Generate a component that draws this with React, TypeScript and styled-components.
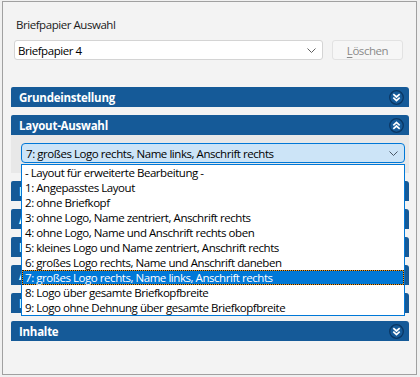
import React from 'react';
import styled, { createGlobalStyle } from 'styled-components';

const Global = createGlobalStyle`
  html, body { margin: 0; padding: 0; background: #f0f0f0; }
  body { font-family: "Open Sans", "Noto Sans", sans-serif; font-size: 11.5px; letter-spacing: -0.45px; color: #000; }
  #root { width: 420px; height: 377px; }
`;

const Panel = styled.div`
  box-sizing: border-box;
  margin: 1px 0 0 2px;
  width: 415px;
  height: 374px;
  border: 1px solid #a0a0a0;
  background: #f3f3f3;
  padding: 15px 7px 0 8px;
`;

const TopSection = styled.div`
  padding-left: 3px;
  display: flex;
  flex-direction: column;
  gap: 7px;
`;

const Label = styled.div`
  padding-left: 2px;
  line-height: 16px;
  color: #1a1a1a;
`;

const Row = styled.div`
  display: flex;
  gap: 9px;
  align-items: center;
`;

const SelectBox = styled.div<{ $w: number; $active?: boolean }>`
  box-sizing: border-box;
  width: ${p => p.$w}px;
  height: 20px;
  display: flex;
  align-items: center;
  justify-content: space-between;
  padding: 0 6px 0 ${p => (p.$active ? 4 : 3)}px;
  background: ${p => (p.$active ? '#cce4f7' : '#ffffff')};
  border: 1px solid ${p => (p.$active ? '#0078d7' : '#d4d4d4')};
  border-radius: ${p => (p.$active ? 4 : 3)}px;
  white-space: nowrap;
`;

const Button = styled.div`
  box-sizing: border-box;
  width: 71px;
  height: 20px;
  display: flex;
  align-items: center;
  justify-content: center;
  background: #f6f6f6;
  border: 1px solid #e2e2e2;
  border-radius: 3px;
  color: #8a8a8a;
  u { text-decoration-thickness: 1px; text-underline-offset: 2px; }
`;

const Accordion = styled.div`
  margin-top: 27px;
  width: 398px;
  display: flex;
  flex-direction: column;
  gap: 8px;
`;

const Header = styled.div`
  box-sizing: border-box;
  height: 20px;
  display: flex;
  align-items: center;
  justify-content: space-between;
  padding: 0 5px 0 8px;
  background: #155a98;
  border-radius: 2px 3px 0 0;
  color: #fff;
  font-size: 11.5px;
  font-weight: 700;
  letter-spacing: -0.25px;
  white-space: nowrap;
`;

const Section = styled.div`
  position: relative;
  display: flex;
  flex-direction: column;
`;

const Content = styled.div`
  height: 38px;
  box-sizing: border-box;
  padding: 8px 4px 0 10px;
  background: #e8e8e8;
`;

const List = styled.div`
  position: absolute;
  z-index: 5;
  left: 10px;
  top: 49px;
  width: 384px;
  box-sizing: border-box;
  border: 1px solid #0078d7;
  background: #fff;
  display: flex;
  flex-direction: column;
`;

const Item = styled.div<{ $selected?: boolean }>`
  box-sizing: border-box;
  height: 15px;
  line-height: 13px;
  padding-left: 2px;
  white-space: nowrap;
  border: 1px solid transparent;
  ${p =>
    p.$selected
      ? `color:#fff; border: 1px dotted #1b1b1b; background: linear-gradient(#0078d7,#0078d7) padding-box, #f29a1a border-box;`
      : ''}
`;

const Chevron = ({ color = '#5f5f5f' }: { color?: string }) => (
  <svg width="9" height="5" viewBox="0 0 9 5">
    <polyline points="0.5,0.5 4.5,4.5 8.5,0.5" fill="none" stroke={color} strokeWidth="1" />
  </svg>
);

const Toggle = ({ up }: { up?: boolean }) => (
  <svg width="15" height="15" viewBox="0 0 15 15">
    <circle cx="7.5" cy="7.5" r="6.8" fill="#155a98" stroke="#0a3764" strokeWidth="1.3" />
    <g transform={up ? 'rotate(180 7.5 7.5)' : undefined} fill="none" stroke="#fff" strokeWidth="1.7">
      <polyline points="4.3,4.1 7.5,7 10.7,4.1" />
      <polyline points="4.3,7.7 7.5,10.6 10.7,7.7" />
    </g>
  </svg>
);

const items = [
  '- Layout für erweiterte Bearbeitung -',
  '1: Angepasstes Layout',
  '2: ohne Briefkopf',
  '3: ohne Logo, Name zentriert, Anschrift rechts',
  '4: ohne Logo, Name und Anschrift rechts oben',
  '5: kleines Logo und Name zentriert, Anschrift rechts',
  '6: großes Logo rechts, Name und Anschrift daneben',
  '7: großes Logo rechts, Name links, Anschrift rechts',
  '8: Logo über gesamte Briefkopfbreite',
  '9: Logo ohne Dehnung über gesamte Briefkopfbreite',
];

const hidden = ['Logo', 'Anschrift', 'Name', 'Absender', 'Fußzeile'];

export default function App() {
  return (
    <>
      <Global />
      <Panel>
        <TopSection>
          <Label>Briefpapier Auswahl</Label>
          <Row>
            <SelectBox $w={309}>
              <span>Briefpapier 4</span>
              <Chevron />
            </SelectBox>
            <Button>
              <span><u>L</u>öschen</span>
            </Button>
          </Row>
        </TopSection>
        <Accordion>
          <Header>
            <span>Grundeinstellung</span>
            <Toggle />
          </Header>
          <Section>
            <Header>
              <span>Layout-Auswahl</span>
              <Toggle up />
            </Header>
            <Content>
              <SelectBox $w={384} $active>
                <span>7: großes Logo rechts, Name links, Anschrift rechts</span>
                <Chevron color="#4a5866" />
              </SelectBox>
            </Content>
            <List>
              {items.map((t, i) => (
                <Item key={t} $selected={i === 7}>{t}</Item>
              ))}
            </List>
          </Section>
          {hidden.map(h => (
            <Header key={h}>
              <span>{h}</span>
              <Toggle />
            </Header>
          ))}
          <Header>
            <span>Inhalte</span>
            <Toggle />
          </Header>
        </Accordion>
      </Panel>
    </>
  );
}
